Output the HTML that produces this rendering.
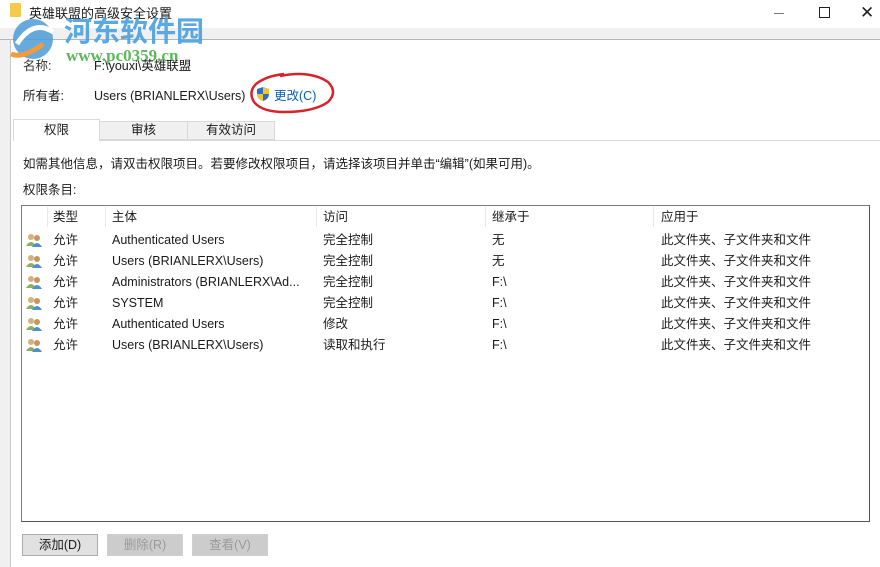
<!DOCTYPE html>
<html><head><meta charset="utf-8"><style>
*{margin:0;padding:0;box-sizing:border-box}
body{width:880px;height:567px;background:#fff;position:relative;overflow:hidden;font-family:"Liberation Sans","Noto Sans CJK SC",sans-serif;font-size:12.5px;color:#1a1a1a}
.a{position:absolute;white-space:nowrap;line-height:16px}
.sep{position:absolute;top:207px;width:1px;height:20px;background:#e8e8e8}
.btn{position:absolute;top:534px;height:22px;border:1px solid #adadad;background:#e1e1e1;text-align:center;line-height:20px}
.dis{color:#9a9a9a;border-color:#cfcfcf;background:#ccc}
.ic{position:absolute;left:26px;width:16px;height:14px}
</style></head><body>
<div class="a" style="left:10px;top:3px;width:11px;height:14px;background:#f5c94d;border-radius:1px"></div>
<div class="a" style="left:29px;top:6px;font-size:13px">英雄联盟的高级安全设置</div>
<div class="a" style="left:774px;top:13px;width:10px;height:1px;background:#777"></div>
<div class="a" style="left:819px;top:7px;width:11px;height:11px;border:1px solid #222"></div>
<div class="a" style="left:860px;top:5px;font-size:17px;color:#222">✕</div>
<div class="a" style="left:0;top:28px;width:880px;height:12px;background:#f0f0f0;border-bottom:1px solid #b5b5b5"></div>
<div class="a" style="left:0;top:40px;width:11px;height:527px;background:#f0f0f0;border-right:1px solid #c8c8c8"></div>
<svg class="a" style="left:3px;top:14px" width="60" height="50"><circle cx="30" cy="25" r="20" fill="#4b9bd8" opacity=".85"/><path d="M14 30 Q30 5 50 18" stroke="#fff" stroke-width="5" fill="none"/><path d="M8 40 Q20 45 40 30" stroke="#f39a3a" stroke-width="5" fill="none"/></svg>
<div class="a" style="left:64px;top:14px;font-size:28px;line-height:32px;font-weight:bold;color:#4aa0e0;font-family:'Noto Sans CJK SC',sans-serif;opacity:.9">河东软件园</div>
<div class="a" style="left:66px;top:47px;font-size:17px;line-height:18px;font-weight:bold;color:#5cb85c;font-family:'Liberation Serif',serif">www.pc0359.cn</div>
<div class="a" style="left:23px;top:58px;color:#333">名称:</div>
<div class="a" style="left:94px;top:58px">F:\youxi\英雄联盟</div>
<div class="a" style="left:23px;top:88px">所有者:</div>
<div class="a" style="left:94px;top:88px">Users (BRIANLERX\Users)</div>
<svg class="a" style="left:256px;top:86px" width="14" height="16"><path d="M7 1 L13 3 L13 8 Q13 13 7 15 Q1 13 1 8 L1 3 Z" fill="#2d6fc4"/><path d="M7 1 L13 3 L13 8 L7 8Z" fill="#f4c430"/><path d="M1 8 L7 8 L7 15 Q1 13 1 8Z" fill="#f4c430"/></svg>
<div class="a" style="left:274px;top:88px;color:#0b5eb0">更改(C)</div>
<svg class="a" style="left:240px;top:68px" width="100" height="52"><path d="M40 8 Q70 2 88 14 Q98 24 88 34 Q74 44 44 44 Q22 44 14 34 Q8 24 16 16 Q26 8 44 6" stroke="#d6232a" stroke-width="2.5" fill="none"/></svg>
<div class="a" style="left:99px;top:140px;width:781px;height:1px;background:#d9d9d9"></div>
<div class="a" style="left:13px;top:119px;width:87px;height:22px;border:1px solid #d9d9d9;border-bottom:none;background:#fff;text-align:center;line-height:20px">权限</div>
<div class="a" style="left:100px;top:121px;width:88px;height:19px;border:1px solid #d9d9d9;border-left:none;background:#f0f0f0;text-align:center;line-height:17px">审核</div>
<div class="a" style="left:187px;top:121px;width:88px;height:19px;border:1px solid #d9d9d9;background:#f0f0f0;text-align:center;line-height:17px">有效访问</div>
<div class="a" style="left:23px;top:156px">如需其他信息，请双击权限项目。若要修改权限项目，请选择该项目并单击“编辑”(如果可用)。</div>
<div class="a" style="left:23px;top:182px">权限条目:</div>
<div class="a" style="left:21px;top:205px;width:849px;height:317px;border:1px solid #7a7a7a;border-right-color:#555;border-bottom-color:#555"></div>
<div class="sep" style="left:47px"></div><div class="sep" style="left:105px"></div><div class="sep" style="left:316px"></div><div class="sep" style="left:485px"></div><div class="sep" style="left:653px"></div>
<div class="a" style="left:53px;top:209px">类型</div>
<div class="a" style="left:112px;top:209px">主体</div>
<div class="a" style="left:323px;top:209px">访问</div>
<div class="a" style="left:492px;top:209px">继承于</div>
<div class="a" style="left:661px;top:209px">应用于</div>
<div class="ic" style="top:233px"><svg width="16" height="14"><circle cx="5" cy="4" r="3" fill="#d6b07a"/><path d="M0 13 Q5 5 10 13Z" fill="#8bb15c"/><circle cx="11" cy="5" r="3" fill="#c89460"/><path d="M6 14 Q11 6 16 14Z" fill="#4f8fd0"/></svg></div>
<div class="ic" style="top:254px"><svg width="16" height="14"><circle cx="5" cy="4" r="3" fill="#d6b07a"/><path d="M0 13 Q5 5 10 13Z" fill="#8bb15c"/><circle cx="11" cy="5" r="3" fill="#c89460"/><path d="M6 14 Q11 6 16 14Z" fill="#4f8fd0"/></svg></div>
<div class="ic" style="top:275px"><svg width="16" height="14"><circle cx="5" cy="4" r="3" fill="#d6b07a"/><path d="M0 13 Q5 5 10 13Z" fill="#8bb15c"/><circle cx="11" cy="5" r="3" fill="#c89460"/><path d="M6 14 Q11 6 16 14Z" fill="#4f8fd0"/></svg></div>
<div class="ic" style="top:296px"><svg width="16" height="14"><circle cx="5" cy="4" r="3" fill="#d6b07a"/><path d="M0 13 Q5 5 10 13Z" fill="#8bb15c"/><circle cx="11" cy="5" r="3" fill="#c89460"/><path d="M6 14 Q11 6 16 14Z" fill="#4f8fd0"/></svg></div>
<div class="ic" style="top:317px"><svg width="16" height="14"><circle cx="5" cy="4" r="3" fill="#d6b07a"/><path d="M0 13 Q5 5 10 13Z" fill="#8bb15c"/><circle cx="11" cy="5" r="3" fill="#c89460"/><path d="M6 14 Q11 6 16 14Z" fill="#4f8fd0"/></svg></div>
<div class="ic" style="top:338px"><svg width="16" height="14"><circle cx="5" cy="4" r="3" fill="#d6b07a"/><path d="M0 13 Q5 5 10 13Z" fill="#8bb15c"/><circle cx="11" cy="5" r="3" fill="#c89460"/><path d="M6 14 Q11 6 16 14Z" fill="#4f8fd0"/></svg></div>
<div class="a" style="left:53px;top:232px">允许</div><div class="a" style="left:112px;top:232px">Authenticated Users</div><div class="a" style="left:323px;top:232px">完全控制</div><div class="a" style="left:492px;top:232px">无</div><div class="a" style="left:661px;top:232px">此文件夹、子文件夹和文件</div>
<div class="a" style="left:53px;top:253px">允许</div><div class="a" style="left:112px;top:253px">Users (BRIANLERX\Users)</div><div class="a" style="left:323px;top:253px">完全控制</div><div class="a" style="left:492px;top:253px">无</div><div class="a" style="left:661px;top:253px">此文件夹、子文件夹和文件</div>
<div class="a" style="left:53px;top:274px">允许</div><div class="a" style="left:112px;top:274px">Administrators (BRIANLERX\Ad...</div><div class="a" style="left:323px;top:274px">完全控制</div><div class="a" style="left:492px;top:274px">F:\</div><div class="a" style="left:661px;top:274px">此文件夹、子文件夹和文件</div>
<div class="a" style="left:53px;top:295px">允许</div><div class="a" style="left:112px;top:295px">SYSTEM</div><div class="a" style="left:323px;top:295px">完全控制</div><div class="a" style="left:492px;top:295px">F:\</div><div class="a" style="left:661px;top:295px">此文件夹、子文件夹和文件</div>
<div class="a" style="left:53px;top:316px">允许</div><div class="a" style="left:112px;top:316px">Authenticated Users</div><div class="a" style="left:323px;top:316px">修改</div><div class="a" style="left:492px;top:316px">F:\</div><div class="a" style="left:661px;top:316px">此文件夹、子文件夹和文件</div>
<div class="a" style="left:53px;top:337px">允许</div><div class="a" style="left:112px;top:337px">Users (BRIANLERX\Users)</div><div class="a" style="left:323px;top:337px">读取和执行</div><div class="a" style="left:492px;top:337px">F:\</div><div class="a" style="left:661px;top:337px">此文件夹、子文件夹和文件</div>
<div class="btn" style="left:22px;width:76px">添加(D)</div>
<div class="btn dis" style="left:107px;width:76px">删除(R)</div>
<div class="btn dis" style="left:192px;width:76px">查看(V)</div>
</body></html>
